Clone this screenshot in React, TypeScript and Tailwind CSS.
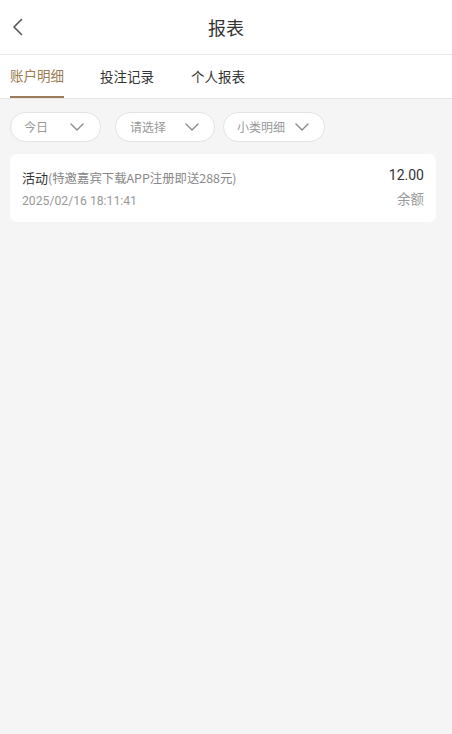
import React from "react";

const Chevron = () => (
  <svg width="14" height="8" viewBox="0 0 14 8" fill="none" stroke="#8a8a8a" strokeWidth="1.4" strokeLinecap="round" strokeLinejoin="round">
    <path d="M1 1 L7 7 L13 1" />
  </svg>
);

export default function App() {
  return (
    <div className="w-[452px] h-[734px] bg-[#f5f5f5] flex flex-col" style={{ fontFamily: '"Noto Sans CJK SC", Roboto, sans-serif' }}>
      <div className="h-[55px] bg-white border-b border-[#e6e6e6] flex items-center relative shrink-0">
        <div className="pl-[12px] flex items-center">
          <svg width="12" height="18" viewBox="0 0 12 18" fill="none" stroke="#555" strokeWidth="1.6" strokeLinecap="round" strokeLinejoin="round">
            <path d="M9.5 1.5 L2 9 L9.5 16.5" />
          </svg>
        </div>
        <div className="absolute left-0 right-0 text-center text-[18px] text-[#333] pointer-events-none">报表</div>
      </div>
      <div className="h-[44px] bg-white border-b border-[#e6e6e6] flex items-stretch pl-[10px] shrink-0">
        <div className="flex flex-col justify-between">
          <div className="flex-1 flex items-center text-[13.5px] text-[#9a7b52]">账户明细</div>
          <div className="h-[2px] bg-[#9a7b5a]" />
        </div>
        <div className="flex items-center ml-[36px] text-[13.5px] text-[#333]">投注记录</div>
        <div className="flex items-center ml-[37px] text-[13.5px] text-[#333]">个人报表</div>
      </div>
      <div className="flex items-center px-[10px] pt-[13px]">
        <div className="w-[91px] flex items-center h-[30px] rounded-full border border-[#e3e3e3] bg-white pl-[13px] pr-[16px]">
          <span className="text-[12px] text-[#999]">今日</span>
          <span className="flex-1" />
          <Chevron />
        </div>
        <div className="ml-[14px] w-[100px] flex items-center h-[30px] rounded-full border border-[#e3e3e3] bg-white pl-[14px] pr-[15px]">
          <span className="text-[12px] text-[#999]">请选择</span>
          <span className="flex-1" />
          <Chevron />
        </div>
        <div className="ml-[8px] w-[102px] flex items-center h-[30px] rounded-full border border-[#e3e3e3] bg-white pl-[13px] pr-[15px]">
          <span className="text-[12px] text-[#999]">小类明细</span>
          <span className="flex-1" />
          <Chevron />
        </div>
      </div>
      <div className="ml-[10px] mr-[16px] mt-[12px] bg-white rounded-[7px] h-[68px] pl-[12px] pr-[12px] flex items-center justify-between">
        <div className="flex flex-col gap-[5px] pt-[2px]">
          <div className="flex items-baseline">
            <span className="text-[13px] text-[#333]">活动</span>
            <span className="text-[12.4px] text-[#888]">(特邀嘉宾下载APP注册即送288元)</span>
          </div>
          <div className="text-[12.2px] text-[#999]" style={{ fontFamily: 'Roboto, sans-serif' }}>2025/02/16 18:11:41</div>
        </div>
        <div className="flex flex-col items-end gap-[2px] -mt-[2px]">
          <div className="text-[14px] text-[#333]" style={{ fontFamily: 'Roboto, sans-serif' }}>12.00</div>
          <div className="text-[13.5px] text-[#999]">余额</div>
        </div>
      </div>
    </div>
  );
}
